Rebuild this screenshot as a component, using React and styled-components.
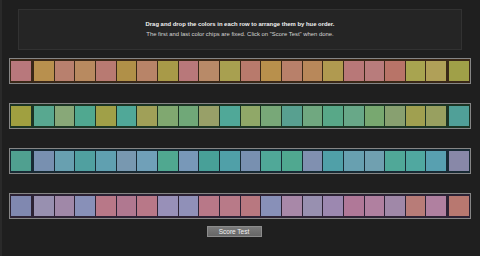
import React from "react";
import styled, { createGlobalStyle } from "styled-components";

const Global = createGlobalStyle`
  html, body { margin: 0; padding: 0; background: #1f1f1f; }
  body { font-family: "Liberation Sans", Arial, sans-serif; }
`;

const rows = [
  ["#b8787c", "#b8904e", "#b8806e", "#b88a60", "#b87a72", "#b09048", "#b88468", "#a89a48", "#b8787a", "#b88a68", "#a8a050",
   "#b87a6c", "#b8904c", "#b8806a", "#b8885a", "#b09a50", "#b87878", "#b87c7c", "#b87468", "#a8a450", "#b0a058", "#a0a048"],
  ["#a0a040", "#58a890", "#88a878", "#50a890", "#a0a048", "#50a898", "#a0a058", "#80a870", "#70a878", "#98a068", "#50a898",
   "#90a868", "#78a878", "#58a090", "#70a880", "#58a888", "#68a888", "#78a870", "#88a070", "#a0a050", "#98a060", "#50a098"],
  ["#50a090", "#7890b0", "#68a0b0", "#50a0a0", "#60a0b0", "#7898b0", "#70a0b8", "#50a890", "#7898b8", "#48a098", "#50a0a8",
   "#7890b0", "#50a898", "#50a890", "#8090b0", "#50a0a8", "#68a0b0", "#70a0b0", "#50a898", "#50a8a0", "#58a0b0", "#8888a8"],
  ["#8088b0", "#9890b0", "#a088a8", "#8890b8", "#b87888", "#b07890", "#b87888", "#9890b8", "#9090b8", "#b87888", "#b87a88",
   "#b87880", "#8890b8", "#a888a8", "#9890b0", "#9c88b0", "#b07898", "#b080a0", "#a088a8", "#b87c78", "#b080a0", "#b87870"],
];

const tints = ["#3a2818", "#1c3424", "#182a34", "#2c2234"];

const Page = styled.div`
  border-left: 2px solid #2a2a2a;
  padding: 9px 9px 0 7px;
  height: 247px;
  display: flex;
  flex-direction: column;
`;

const Header = styled.div`
  margin: 0 9px;
  height: 39px;
  background: #252525;
  border: 1px solid #323232;
  display: flex;
  flex-direction: column;
  align-items: center;
  justify-content: center;
  gap: 3px;
`;

const Title = styled.div`
  color: #f2f2f2;
  font-weight: bold;
  font-size: 5.9px;
  line-height: 7px;
  white-space: nowrap;
`;

const Sub = styled.div`
  color: #d4d4d4;
  font-size: 5.9px;
  line-height: 7px;
  white-space: nowrap;
`;

const Rows = styled.div`
  margin-top: 8px;
  display: flex;
  flex-direction: column;
  gap: 19px;
`;

const Row = styled.div`
  display: flex;
  gap: 1px;
  border: 1px solid #858585;
  padding: 2px 1px;
  background: ${(p) => p.$tint};
  height: 20px;
`;

const Chip = styled.div`
  height: 20px;
  background: ${(p) => p.$c};
  flex: ${(p) => (p.$fixed ? "0 0 20px" : "1 1 0")};
  margin: ${(p) => (p.$fixed === "first" ? "0 2px 0 0" : p.$fixed === "last" ? "0 0 0 2px" : "0")};
`;

const Footer = styled.div`
  margin-top: 7px;
  display: flex;
  justify-content: center;
  padding-right: 12px;
`;

const Button = styled.button`
  width: 55px;
  height: 11px;
  padding: 0;
  background: linear-gradient(#7a7a7a, #666);
  border: 1px solid #8c8c8c;
  color: #f0f0f0;
  font-family: "Liberation Sans", Arial, sans-serif;
  font-size: 6.5px;
  line-height: 9px;
`;

export default function App() {
  return (
    <>
      <Global />
      <Page>
        <Header>
          <Title>Drag and drop the colors in each row to arrange them by hue order.</Title>
          <Sub>The first and last color chips are fixed. Click on "Score Test" when done.</Sub>
        </Header>
        <Rows>
          {rows.map((r, i) => (
            <Row key={i} $tint={tints[i]}>
              {r.map((c, j) => (
                <Chip
                  key={j}
                  $c={c}
                  $fixed={j === 0 ? "first" : j === r.length - 1 ? "last" : undefined}
                />
              ))}
            </Row>
          ))}
        </Rows>
        <Footer>
          <Button>Score Test</Button>
        </Footer>
      </Page>
    </>
  );
}
